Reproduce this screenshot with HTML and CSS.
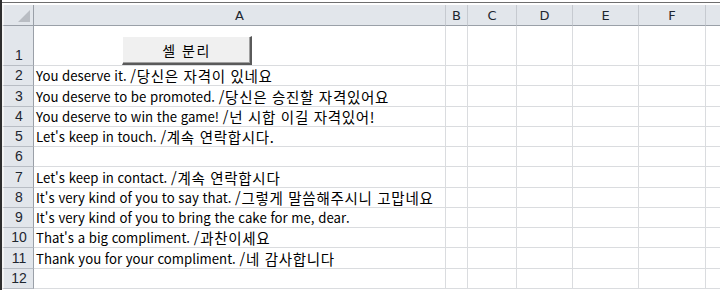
FILE: index.html
```html
<!DOCTYPE html>
<html lang="ko">
<head>
<meta charset="utf-8">
<title>셀 분리</title>
<link rel="stylesheet" href="styles.css">
</head>
<body>
<div class="app">
  <div class="topframe"></div>
  <div class="sheet">
    <div class="corner"><span class="tri"></span></div>
    <div class="ch">A</div>
    <div class="ch">B</div>
    <div class="ch">C</div>
    <div class="ch">D</div>
    <div class="ch">E</div>
    <div class="ch">F</div>
    <div class="ch last"></div>

    <div class="rh r1">1</div><div class="c r1 a"></div><div class="c r1"></div><div class="c r1"></div><div class="c r1"></div><div class="c r1"></div><div class="c r1"></div><div class="c r1 last"></div>

    <div class="rh">2</div><div class="c a">You deserve it.&nbsp;<span class="ko">/당신은 자격이 있네요</span></div><div class="c"></div><div class="c"></div><div class="c"></div><div class="c"></div><div class="c"></div><div class="c last"></div>
    <div class="rh">3</div><div class="c a">You deserve to be promoted.&nbsp;<span class="ko">/당신은 승진할 자격있어요</span></div><div class="c"></div><div class="c"></div><div class="c"></div><div class="c"></div><div class="c"></div><div class="c last"></div>
    <div class="rh">4</div><div class="c a">You deserve to win the game!&nbsp;<span class="ko">/넌 시합 이길 자격있어!</span></div><div class="c"></div><div class="c"></div><div class="c"></div><div class="c"></div><div class="c"></div><div class="c last"></div>
    <div class="rh">5</div><div class="c a">Let's keep in touch.&nbsp;<span class="ko">/계속 연락합시다.</span></div><div class="c"></div><div class="c"></div><div class="c"></div><div class="c"></div><div class="c"></div><div class="c last"></div>
    <div class="rh">6</div><div class="c a"></div><div class="c"></div><div class="c"></div><div class="c"></div><div class="c"></div><div class="c"></div><div class="c last"></div>
    <div class="rh">7</div><div class="c a">Let's keep in contact.&nbsp;<span class="ko">/계속 연락합시다</span></div><div class="c"></div><div class="c"></div><div class="c"></div><div class="c"></div><div class="c"></div><div class="c last"></div>
    <div class="rh">8</div><div class="c a">It's very kind of you to say that.&nbsp;<span class="ko">/그렇게 말씀해주시니 고맙네요</span></div><div class="c"></div><div class="c"></div><div class="c"></div><div class="c"></div><div class="c"></div><div class="c last"></div>
    <div class="rh">9</div><div class="c a">It's very kind of you to bring the cake for me, dear.</div><div class="c"></div><div class="c"></div><div class="c"></div><div class="c"></div><div class="c"></div><div class="c last"></div>
    <div class="rh">10</div><div class="c a">That's a big compliment.&nbsp;<span class="ko">/과찬이세요</span></div><div class="c"></div><div class="c"></div><div class="c"></div><div class="c"></div><div class="c"></div><div class="c last"></div>
    <div class="rh">11</div><div class="c a">Thank you for your compliment.&nbsp;<span class="ko">/네 감사합니다</span></div><div class="c"></div><div class="c"></div><div class="c"></div><div class="c"></div><div class="c"></div><div class="c last"></div>
    <div class="rh">12</div><div class="c a"></div><div class="c"></div><div class="c"></div><div class="c"></div><div class="c"></div><div class="c"></div><div class="c last"></div>
  </div>
  <button class="btn" type="button">셀 분리</button>
</div>
</body>
</html>
```
FILE: styles.css
```css
html, body {
  margin: 0;
  padding: 0;
  background: #ffffff;
}
.app {
  position: relative;
  width: 720px;
  height: 290px;
  overflow: hidden;
  border-left: 2px solid #2e2e2e;
  box-sizing: border-box;
  font-family: "Noto Sans CJK KR", "Noto Sans", sans-serif;
  font-size: 14px;
  color: #000;
}
.topframe {
  height: 2px;
  background: #ffffff;
  border-bottom: 1px solid #6e6e6e;
  box-shadow: 0 1px 0 #ffffff;
  margin-bottom: 2px;
}
.sheet {
  display: grid;
  grid-template-columns: 32px 412px 22px 49px 56px 66px 67px 1fr;
  grid-template-rows: 21px 40px 20px 21px 20px 20px 20px 21px 20px 20px 20px 21px 20px;
}
.corner, .ch, .rh {
  background: #e2e6eb;
  box-sizing: border-box;
}
.corner {
  position: relative;
  border-left: 2px solid #f4f4f4;
  border-right: 1px solid #9aa0a8;
  border-bottom: 1px solid #9aa0a8;
}
.tri {
  position: absolute;
  right: 3px;
  bottom: 3px;
  width: 0;
  height: 0;
  border-left: 12px solid transparent;
  border-bottom: 12px solid #b9bdc3;
}
.ch {
  border-right: 1px solid #c6cad0;
  border-bottom: 1px solid #9aa0a8;
  display: flex;
  align-items: center;
  justify-content: center;
  font-family: "DejaVu Sans", "Noto Sans", sans-serif;
  font-size: 13px;
  color: #1e2630;
  padding-top: 1px;
}
.rh {
  border-left: 2px solid #f4f4f4;
  border-right: 1px solid #9aa0a8;
  border-bottom: 1px solid #b8bdc4;
  display: flex;
  align-items: flex-end;
  justify-content: center;
  font-family: "Liberation Sans", "Noto Sans", sans-serif;
  font-size: 14px;
  color: #1e2630;
  line-height: 19px;
  padding-left: 1px;
}
.c {
  box-sizing: border-box;
  border-right: 1px solid #dadcdf;
  border-bottom: 1px solid #dadcdf;
  background: #ffffff;
}
.c.last, .ch.last {
  border-right: none;
}
.c.a {
  white-space: nowrap;
  overflow: visible;
  padding-left: 2px;
  line-height: 19px;
  font-size: 13.2px;
  display: flex;
  align-items: flex-end;
}
.ko {
  font-size: 14.5px;
  letter-spacing: 0.7px;
}
.btn {
  position: absolute;
  left: 120px;
  top: 36px;
  width: 130px;
  height: 29px;
  margin: 0;
  padding: 0;
  background: #f0f0f0;
  border-top: 1px solid #ffffff;
  border-left: 1px solid #ffffff;
  border-right: 2px solid #5a5a5a;
  border-bottom: 2px solid #5a5a5a;
  box-shadow: inset -1px -1px 0 #a0a0a0;
  font-family: "Noto Sans CJK KR", sans-serif;
  font-size: 14px;
  letter-spacing: 1.5px;
  color: #000;
  cursor: default;
}
```
